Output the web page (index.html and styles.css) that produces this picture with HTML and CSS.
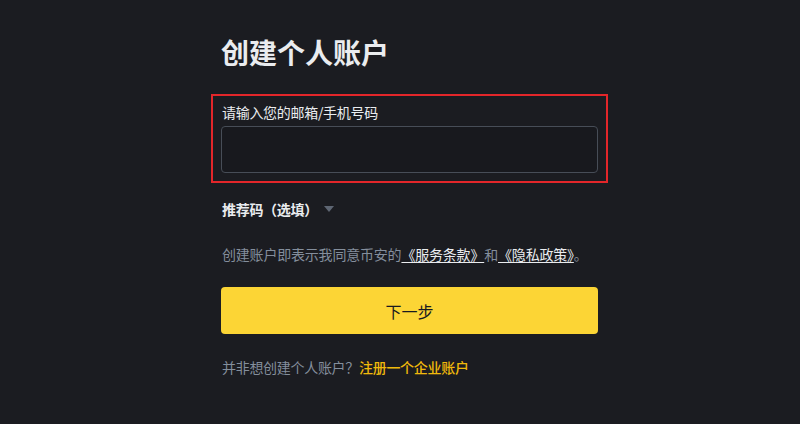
FILE: index.html
```html
<!DOCTYPE html>
<html lang="zh-CN">
<head>
<meta charset="utf-8">
<title>创建个人账户</title>
<link rel="stylesheet" href="styles.css">
</head>
<body>
<main class="page">
  <div class="form">
    <h1 class="title">创建个人账户</h1>
    <div class="field highlighted">
      <label class="field-label" for="account">请输入您的邮箱/手机号码</label>
      <input class="field-input" id="account" type="text">
    </div>
    <div class="referral">
      <span>推荐码（选填）</span>
      <span class="caret"></span>
    </div>
    <p class="terms">创建账户即表示我同意币安的<a class="terms-link" href="#">《服务条款》</a>和<a class="terms-link" href="#">《隐私政策》</a>。</p>
    <button class="next-btn" type="button">下一步</button>
    <p class="alt">并非想创建个人账户？<a class="alt-link" href="#">注册一个企业账户</a></p>
  </div>
</main>
</body>
</html>
```

FILE: styles.css
```css
html, body {
  margin: 0;
  padding: 0;
  background: #1b1c21;
  height: 100%;
}
body {
  font-family: "Noto Sans CJK SC", "Noto Sans", "Liberation Sans", sans-serif;
  color: #eaecef;
  font-size: 14px;
  letter-spacing: -0.3px;
}
.page {
  padding: 34px 0 0 221px;
}
.form {
  width: 377px;
  display: flex;
  flex-direction: column;
}
.title {
  margin: 0;
  font-size: 28px;
  line-height: 36px;
  font-weight: 700;
  letter-spacing: 0;
  color: #eaecef;
}
.field {
  margin-top: 34px;
  display: flex;
  flex-direction: column;
}
.highlighted {
  outline: 2px solid #e3262a;
  outline-offset: 8px;
}
.field-label {
  font-size: 14px;
  line-height: 16px;
  padding-left: 1px;
  color: #eaecef;
}
.field-input {
  margin-top: 6px;
  height: 47px;
  box-sizing: border-box;
  border: 1px solid #474d57;
  border-radius: 4px;
  background: #18191e;
  color: #eaecef;
  outline: none;
  padding: 0 12px;
}
.referral {
  margin-top: 26px;
  display: flex;
  align-items: center;
  line-height: 20px;
  font-weight: 600;
  padding-left: 1px;
}
.caret {
  margin-left: 6px;
  width: 0;
  height: 0;
  border-left: 5px solid transparent;
  border-right: 5px solid transparent;
  border-top: 6px solid #5e6673;
}
.terms {
  margin: 25px 0 0;
  line-height: 20px;
  color: #848e9c;
  padding-left: 1px;
  letter-spacing: -0.2px;
}
.terms-link {
  color: #eaecef;
  text-decoration: underline;
  text-underline-offset: 2px;
}
.next-btn {
  margin-top: 23px;
  height: 47px;
  border: none;
  border-radius: 4px;
  background: #fcd535;
  color: #181a20;
  font-family: inherit;
  font-size: 16px;
  letter-spacing: 0;
  cursor: pointer;
}
.alt {
  margin: 23px 0 0;
  line-height: 20px;
  color: #848e9c;
  padding-left: 1px;
}
.alt-link {
  color: #f0b90b;
  font-weight: 500;
  text-decoration: none;
}
```
